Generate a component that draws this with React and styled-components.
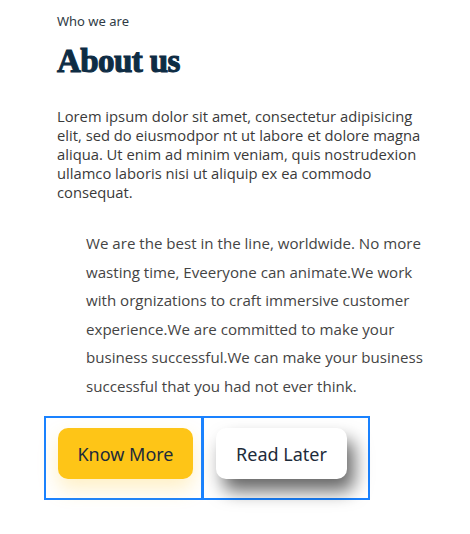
import React from 'react'
import styled, { createGlobalStyle } from 'styled-components'

const GlobalStyle = createGlobalStyle`
body{
  margin:0;
  background:#ffffff;
  font-family:"Open Sans", sans-serif;
}
`

const Section = styled.section`
width:470px;
height:534px;
padding:12px 0px 0px 57px;
box-sizing:border-box;
`
const Eyebrow = styled.span`
display:block;
font-family:"Noto Sans", sans-serif;
font-size:13px;
color:#2f3b45;
line-height:18px;
`
const Title = styled.h1`
margin:12px 0px 0px;
font-family:"Liberation Serif", serif;
font-weight:700;
font-size:33px;
letter-spacing:-0.6px;
line-height:38px;
color:#0e2c44;
-webkit-text-stroke:1.1px #0e2c44;
`
const Lead = styled.p`
margin:27px 0px 0px;
width:372px;
font-size:14.75px;
line-height:19px;
color:#3a3a3a;
`
const Quote = styled.p`
margin:27px 0px 0px 29px;
width:345px;
font-size:15.1px;
line-height:28.5px;
color:#444444;
`
const Actions = styled.div`
display:flex;
margin:16px 0px 0px -13px;
`
const Slot = styled.div`
border:2px solid #1a82ff;
padding:10px ${p=>p.right}px 19px 12px;
& + &{
  margin-left:-1px;
}
`
const Button = styled.button`
height:51px;
width:${p=>p.width}px;
border:none;
border-radius:10px;
font-family:"Noto Sans", sans-serif;
font-size:18px;
color:#1d2b3a;
cursor:pointer;
background-color:${p=>p.bg};
box-shadow:${p=>p.shadow};
`

const App = () => {
  return (
    <>
      <GlobalStyle/>
      <Section>
        <Eyebrow>Who we are</Eyebrow>
        <Title>About us</Title>
        <Lead>Lorem ipsum dolor sit amet, consectetur adipisicing elit, sed do eiusmodpor nt ut labore et dolore magna aliqua. Ut enim ad minim veniam, quis nostrudexion ullamco laboris nisi ut aliquip ex ea commodo consequat.</Lead>
        <Quote>We are the best in the line, worldwide. No more wasting time, Eveeryone can animate.We work with orgnizations to craft immersive customer experience.We are committed to make your business successful.We can make your business successful that you had not ever think.</Quote>
        <Actions>
          <Slot right={8}>
            <Button width={135} bg="#fec517" shadow="0px 10px 20px rgba(254,197,23,0.25)">Know More</Button>
          </Slot>
          <Slot right={21}>
            <Button width={131} bg="#ffffff" shadow="7px 12px 18px rgba(0,0,0,0.6)">Read Later</Button>
          </Slot>
        </Actions>
      </Section>
    </>
  )
}

export default App
